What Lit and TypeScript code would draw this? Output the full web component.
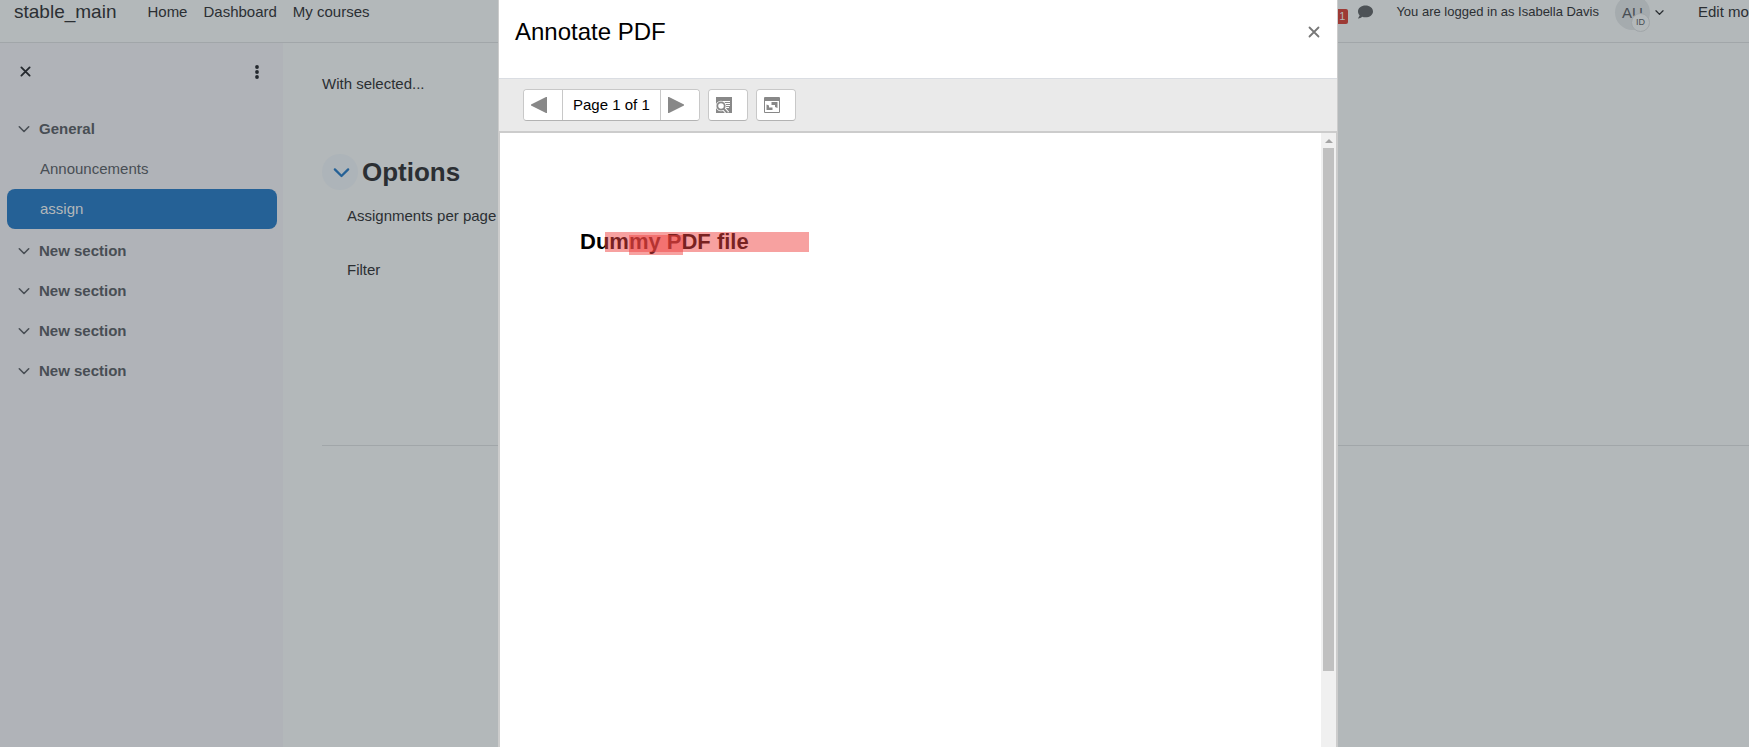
import { LitElement, html, css, svg } from "lit";
import { customElement, state } from "lit/decorators.js";

interface CourseItem {
  name: string;
  active?: boolean;
}

interface CourseSection {
  name: string;
  items: CourseItem[];
}

const chevron = (size: number, weight = 1.6) => svg`
  <svg width=${size} height=${size} viewBox="0 0 12 12" fill="none" stroke="currentColor"
    stroke-width=${weight} stroke-linecap="round" stroke-linejoin="round" aria-hidden="true">
    <path d="M1.3 3.8 6 8.5l4.7-4.7" />
  </svg>`;

const cross = (size: number, weight: number) => svg`
  <svg width=${size} height=${size} viewBox="0 0 12 12" fill="none" stroke="currentColor"
    stroke-width=${weight} stroke-linecap="round" aria-hidden="true">
    <path d="M1.5 1.5 10.5 10.5M10.5 1.5 1.5 10.5" />
  </svg>`;

@customElement("course-index")
export class CourseIndex extends LitElement {
  @state() private sections: CourseSection[] = [
    { name: "General", items: [{ name: "Announcements" }, { name: "assign", active: true }] },
    { name: "New section", items: [] },
    { name: "New section", items: [] },
    { name: "New section", items: [] },
    { name: "New section", items: [] },
  ];

  static styles = css`
    :host {
      display: block;
      flex: none;
      box-sizing: border-box;
      width: 283px;
      padding: 0 6px 0 7px;
      background: #b0b3b8;
      color: #484e54;
    }
    button {
      display: flex;
      align-items: center;
      justify-content: center;
      padding: 0;
      border: 0;
      background: none;
      color: inherit;
      font: inherit;
    }
    .tools {
      display: flex;
      justify-content: space-between;
      height: 57px;
      padding-bottom: 9px;
      color: #24292e;
    }
    .tool {
      width: 36px;
    }
    .tool-more {
      width: 40px;
    }
    .section {
      display: flex;
      align-items: center;
      height: 40px;
      padding-left: 11px;
      font-weight: 700;
    }
    .items {
      padding-bottom: 2px;
    }
    .toggle {
      width: 12px;
      margin-right: 9px;
    }
    .item {
      display: flex;
      align-items: center;
      height: 40px;
      padding-left: 33px;
      border-radius: 8px;
    }
    .active {
      background: #256196;
      color: #b3b8ba;
    }
    a {
      color: inherit;
      text-decoration: none;
    }
  `;

  render() {
    return html`
      <div class="tools">
        <button class="tool" aria-label="Close course index">${cross(11, 2)}</button>
        <button class="tool-more" aria-label="Course index options">
          <svg width="4" height="14" viewBox="0 0 4 14" fill="currentColor" aria-hidden="true">
            <circle cx="2" cy="2" r="1.9" />
            <circle cx="2" cy="7" r="1.9" />
            <circle cx="2" cy="12" r="1.9" />
          </svg>
        </button>
      </div>
      <nav aria-label="Course index">
        ${this.sections.map(
          (s) => html`
            <div class="section">
              <button class="toggle" aria-label="Collapse">${chevron(12)}</button>
              <a href="#">${s.name}</a>
            </div>
            ${s.items.length
              ? html`<div class="items">
                  ${s.items.map(
                    (i) => html`<a href="#" class="item ${i.active ? "active" : ""}">${i.name}</a>`
                  )}
                </div>`
              : ""}
          `
        )}
      </nav>
    `;
  }
}

@customElement("annotate-dialog")
export class AnnotateDialog extends LitElement {
  static styles = css`
    :host {
      display: flex;
      flex-direction: column;
      box-sizing: border-box;
      width: 840px;
      max-width: 100%;
      border: solid #cccccc;
      border-width: 0 1px;
      background: #fff;
      color: #000;
    }
    header {
      display: flex;
      align-items: flex-start;
      justify-content: space-between;
      box-sizing: border-box;
      height: 79px;
      padding: 14px 13px 0 16px;
      border-bottom: 1px solid #dadde2;
    }
    h2 {
      margin: 0;
      font-size: 24px;
      line-height: 36px;
      font-weight: 400;
    }
    button {
      box-sizing: border-box;
      padding: 0;
      border: 0;
      background: #fff;
      color: #888;
      font: inherit;
    }
    .close {
      display: flex;
      align-items: center;
      justify-content: center;
      width: 20px;
      height: 36px;
      color: #777;
    }
    .toolbar {
      display: flex;
      gap: 8px;
      padding: 10px 24px;
      background: #eaeaea;
    }
    .group {
      display: flex;
      height: 32px;
      box-sizing: border-box;
      border: 1px solid #c8c8c8;
      border-bottom-color: #b3b3b3;
      border-radius: 4px;
      background: #fff;
      overflow: hidden;
    }
    .tool {
      display: flex;
      align-items: center;
      width: 38px;
      padding-left: 7px;
    }
    .page {
      display: flex;
      align-items: center;
      padding: 0 10px;
      border: solid #c8c8c8;
      border-width: 0 1px;
      white-space: nowrap;
    }
    .viewer {
      display: flex;
      flex: 1;
      border: solid #cccccc;
      border-width: 2px 1px 0;
    }
    .sheet {
      position: relative;
      flex: 1;
      padding: 96px 80px 0;
    }
    .line {
      margin: 0;
      font-size: 22px;
      line-height: 25px;
      font-weight: 700;
      white-space: nowrap;
    }
    .mark {
      position: absolute;
      height: 20px;
      background: rgba(239, 67, 65, 0.5);
    }
    .mark-wide {
      left: 105px;
      top: 99px;
      width: 204px;
    }
    .mark-short {
      left: 129px;
      top: 102px;
      width: 54px;
    }
    .scroll {
      display: flex;
      flex-direction: column;
      align-items: center;
      width: 15px;
      background: #f0f0f0;
    }
    .arrow {
      flex: none;
      display: flex;
      align-items: center;
      height: 15px;
    }
    .thumb {
      width: 11px;
      height: 523px;
      background: #c0c0c0;
    }
  `;

  render() {
    return html`
      <header>
        <h2 id="title">Annotate PDF</h2>
        <button class="close" aria-label="Close">${cross(12, 1.8)}</button>
      </header>
      <div class="toolbar">
        <div class="group">
          <button class="tool" aria-label="Previous page">
            <svg width="16" height="16" viewBox="0 0 16 16" fill="currentColor" aria-hidden="true">
              <path d="M16 0v16h-1L0 8.600V7.400L15 0z" />
            </svg>
          </button>
          <span class="page">Page 1 of 1</span>
          <button class="tool" aria-label="Next page">
            <svg width="16" height="16" viewBox="0 0 16 16" fill="currentColor" aria-hidden="true">
              <path d="M0 0v16h1L16 8.600V7.400L1 0z" />
            </svg>
          </button>
        </div>
        <div class="group">
          <button class="tool" aria-label="Search comments">
            <svg width="16" height="16" viewBox="0 0 16 16" aria-hidden="true">
              <path fill="#888" d="M0 0h16v16H0z" />
              <path stroke="#fff" d="M7 4.500h7M9 6.500h5M10 8.500h4M10 10.500h3" />
              <circle cx="5" cy="9" r="5.200" fill="#fff" />
              <path stroke="#fff" stroke-width="4" d="m7.600 11.600 4 4.400" />
              <circle cx="5" cy="9" r="3.700" fill="#fff" stroke="#888" stroke-width="1.800" />
              <path stroke="#888" stroke-width="2" d="m7.600 11.600 3.800 4.400" />
            </svg>
          </button>
        </div>
        <div class="group">
          <button class="tool" aria-label="Expand">
            <svg width="16" height="16" viewBox="0 0 16 16" aria-hidden="true">
              <rect width="16" height="16" rx="1" fill="#888" />
              <path fill="#fff" d="M1 4h14v11H1z" />
              <path fill="#888" d="M7.500 5H13.500V11L11 10V8H7.500zM2.500 7.500 5 8.500V10.500H8.500V13H2.500z" />
            </svg>
          </button>
        </div>
      </div>
      <div class="viewer">
        <div class="sheet">
          <p class="line">Dummy PDF file</p>
          <div class="mark mark-wide"></div>
          <div class="mark mark-short"></div>
        </div>
        <div class="scroll" aria-hidden="true">
          <div class="arrow">
            <svg width="8" height="4" viewBox="0 0 8 4" fill="#a3a3a3"><path d="M4 0 8 4H0z" /></svg>
          </div>
          <div class="thumb"></div>
        </div>
      </div>
    `;
  }
}

@customElement("app-root")
export class AppRoot extends LitElement {
  static styles = css`
    :host {
      display: flex;
      flex-direction: column;
      position: relative;
      min-height: 100vh;
      overflow: hidden;
      background: #b3b8ba;
      color: #2b2f33;
      font: 15px/22px "Liberation Sans", Arial, sans-serif;
    }
    a {
      color: inherit;
      text-decoration: none;
    }
    button {
      display: flex;
      align-items: center;
      justify-content: center;
      padding: 0;
      border: 0;
      background: none;
      color: inherit;
      font: inherit;
    }
    .navbar {
      display: flex;
      align-items: flex-start;
      height: 42px;
      border-bottom: 1px solid #a1a6a9;
      white-space: nowrap;
      overflow: hidden;
    }
    .brand {
      margin: 0 31px 0 14px;
      font-size: 19px;
      line-height: 24px;
    }
    .links {
      display: flex;
      gap: 16px;
      line-height: 24px;
    }
    .user {
      display: flex;
      align-items: center;
      height: 24px;
      margin-left: auto;
    }
    .count {
      align-self: flex-end;
      height: 15px;
      padding: 0 3px;
      margin-right: 10px;
      border-radius: 2px;
      background: #9d3a35;
      color: #b3b8ba;
      font-size: 11px;
      line-height: 15px;
    }
    .chat {
      color: #4d5256;
    }
    .login {
      margin: 0 16px 0 23px;
      font-size: 13px;
    }
    .menu {
      position: relative;
      gap: 5px;
    }
    .avatar {
      width: 35px;
      height: 35px;
      border-radius: 50%;
      background: #a5abae;
      color: #484e54;
      line-height: 35px;
      text-align: center;
    }
    .initials {
      position: absolute;
      left: 16px;
      top: 18px;
      box-sizing: border-box;
      width: 19px;
      height: 19px;
      border: 1px solid #a1a6a9;
      border-radius: 50%;
      background: #b3b8ba;
      color: #484e54;
      font-size: 9px;
      line-height: 17px;
      text-align: center;
    }
    .edit {
      width: 51px;
      margin-left: 34px;
    }
    .body {
      display: flex;
      flex: 1;
    }
    main {
      flex: 1;
      padding: 30px 0 0 39px;
    }
    p {
      margin: 0;
    }
    .heading {
      display: flex;
      align-items: center;
      gap: 4px;
      margin-top: 59px;
    }
    .collapse {
      width: 36px;
      height: 36px;
      padding-left: 2px;
      box-sizing: border-box;
      border-radius: 50%;
      background: #adb4b9;
      color: #256196;
    }
    h3 {
      margin: 0;
      font-size: 26px;
      line-height: 36px;
    }
    .fields {
      display: grid;
      gap: 32px;
      padding: 15px 0 0 25px;
    }
    hr {
      margin: 164px 0 0;
      border: 0;
      border-top: 1px solid #a1a6a9;
    }
    .overlay {
      position: absolute;
      inset: 0;
      display: flex;
      justify-content: center;
      padding-left: 87px;
    }
  `;

  render() {
    return html`
      <header class="navbar">
        <a class="brand" href="#">stable_main</a>
        <nav class="links">
          <a href="#">Home</a>
          <a href="#">Dashboard</a>
          <a href="#">My courses</a>
        </nav>
        <div class="user">
          <span class="count">1</span>
          <button class="chat" aria-label="Messages">
            <svg width="15" height="14" viewBox="0 0 15 14" fill="currentColor" aria-hidden="true">
              <path d="M7.500.500C11.700.500 15 3.100 15 6.400s-3.300 5.900-7.500 5.900c-1.200 0-2.300-.2-3.300-.6C3.100 12.600 1.700 13.400.2 13.400c-.2 0-.3-.3-.1-.5.6-.6 1.300-1.800 1.500-2.700C.6 9.200 0 7.900 0 6.400 0 3.100 3.300.500 7.500.500z" />
            </svg>
          </button>
          <span class="login">You are logged in as Isabella Davis</span>
          <button class="menu" aria-label="User menu">
            <span class="avatar">AU</span>
            <span class="initials">ID</span>
            ${chevron(9, 1.8)}
          </button>
          <span class="edit">Edit mode</span>
        </div>
      </header>
      <div class="body">
        <course-index></course-index>
        <main>
          <p>With selected...</p>
          <div class="heading">
            <button class="collapse" aria-label="Collapse options">${chevron(17, 1.6)}</button>
            <h3>Options</h3>
          </div>
          <div class="fields">
            <p>Assignments per page</p>
            <p>Filter</p>
          </div>
          <hr />
        </main>
      </div>
      <div class="overlay">
        <annotate-dialog role="dialog" aria-label="Annotate PDF"></annotate-dialog>
      </div>
    `;
  }
}
